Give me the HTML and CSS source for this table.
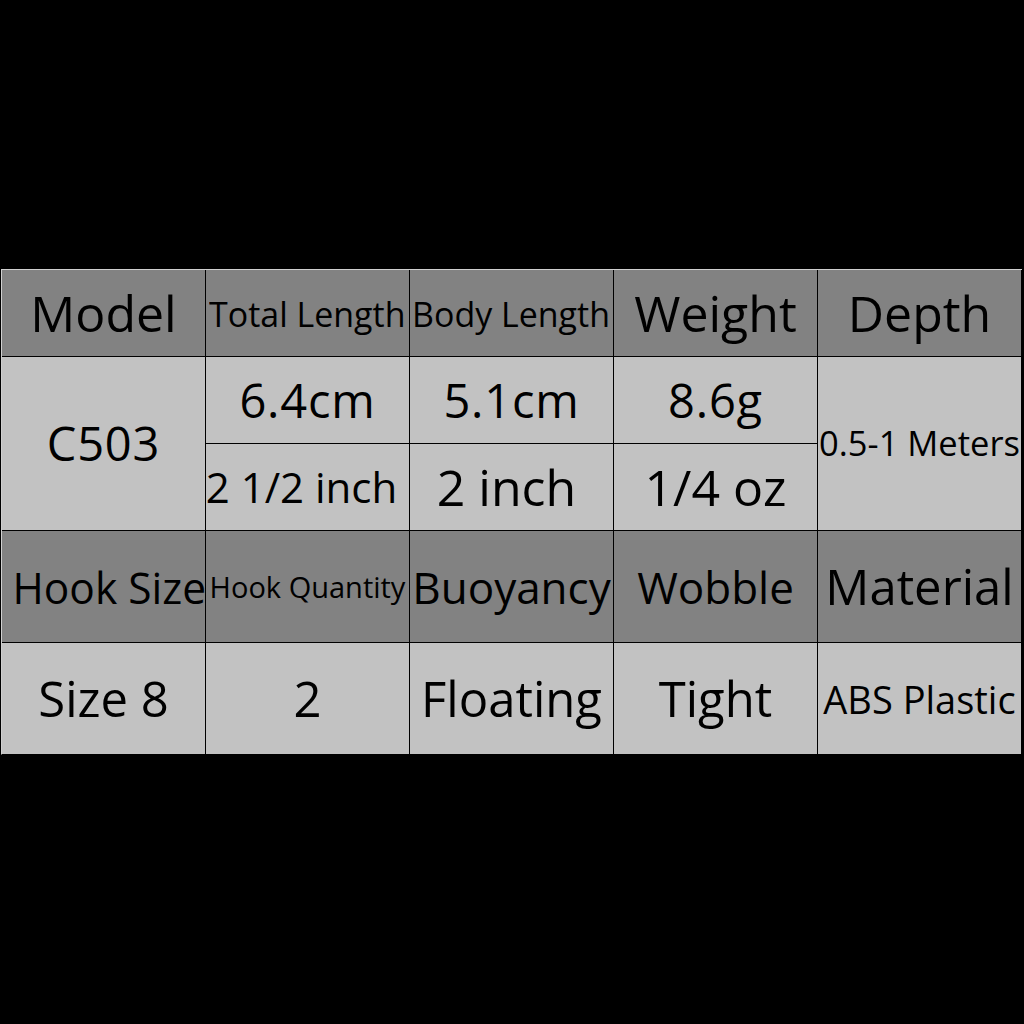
FILE: index.html
```html
<!DOCTYPE html>
<html>
<head>
<meta charset="utf-8">
<link rel="stylesheet" href="styles.css">
</head>
<body>
<div class="page">
  <div class="specs">
    <div class="cell head"><span class="t xl">Model</span></div>
    <div class="cell head"><span class="t sm">Total Length</span></div>
    <div class="cell head"><span class="t sm">Body Length</span></div>
    <div class="cell head"><span class="t xl">Weight</span></div>
    <div class="cell head"><span class="t xl">Depth</span></div>

    <div class="cell data span2"><span class="t num">C503</span></div>
    <div class="cell data"><span class="t num">6.4cm</span></div>
    <div class="cell data"><span class="t num">5.1cm</span></div>
    <div class="cell data"><span class="t num">8.6g</span></div>
    <div class="cell data span2"><span class="t xs">0.5-1 Meters</span></div>
    <div class="cell data"><span class="t md">2 1/2 inch</span></div>
    <div class="cell data"><span class="t big shift">2 inch</span></div>
    <div class="cell data"><span class="t big">1/4 oz</span></div>

    <div class="cell head"><span class="t hook">Hook Size</span></div>
    <div class="cell head"><span class="t xxs">Hook Quantity</span></div>
    <div class="cell head"><span class="t lg">Buoyancy</span></div>
    <div class="cell head"><span class="t lg">Wobble</span></div>
    <div class="cell head"><span class="t lgx">Material</span></div>

    <div class="cell data"><span class="t lgx">Size 8</span></div>
    <div class="cell data"><span class="t lgx">2</span></div>
    <div class="cell data"><span class="t lgx">Floating</span></div>
    <div class="cell data"><span class="t lgx">Tight</span></div>
    <div class="cell data"><span class="t abs">ABS Plastic</span></div>
  </div>
</div>
</body>
</html>
```
FILE: styles.css
```css
html, body {
  margin: 0;
  padding: 0;
  background: #000;
}
.page {
  width: 1024px;
  height: 1024px;
  padding-top: 269px;
  box-sizing: border-box;
}
.specs {
  margin-left: 1px;
  width: 1020px;
  display: grid;
  grid-template-columns: repeat(5, 203px);
  grid-template-rows: 86px 86px 86px 111px 111px;
  gap: 1px;
  border-top: 1px solid #d0d0d0;
  border-left: 1px solid #d0d0d0;
  border-bottom: 1px solid #000;
  box-sizing: content-box;
  font-family: "Open Sans", "Noto Sans", sans-serif;
  color: #000;
}
.cell {
  display: flex;
  align-items: center;
  justify-content: center;
  overflow: visible;
  white-space: nowrap;
}
.head { background: #828282; }
.data { background: #c2c2c2; }
.span2 { grid-row: span 2; }
.t { display: inline-block; line-height: 1; }
.xl { font-size: 50px; }
.num { font-size: 47px; letter-spacing: 0.8px; }
.big { font-size: 50px; }
.shift { transform: translateX(-5px); }
.lg { font-size: 44px; }
.lgx { font-size: 49px; }
.md { font-size: 42px; transform: translateX(-6px); }
.hook { font-size: 44px; transform: translateX(6px) scaleX(0.965); }
.sm { font-size: 35px; transform: scaleX(0.97); }
.xs { font-size: 34.5px; }
.xxs { font-size: 29px; }
.abs { font-size: 38px; }
```
